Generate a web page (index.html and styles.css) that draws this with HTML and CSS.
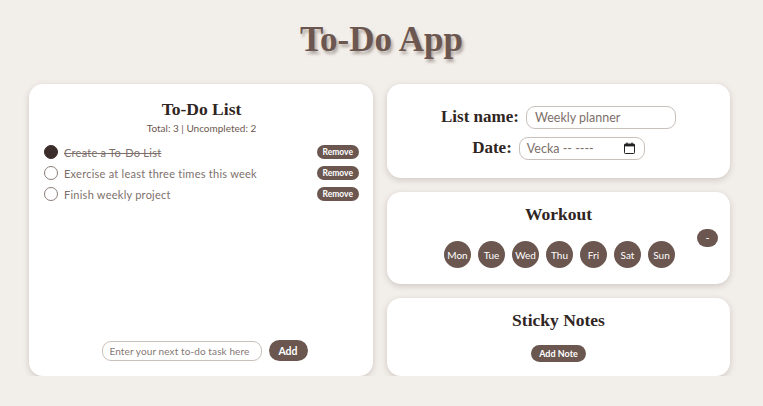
FILE: index.html
```html
<!DOCTYPE html>
<html lang="sv">
<head>
<meta charset="utf-8">
<title>To-Do App</title>
<link rel="stylesheet" href="styles.css">
</head>
<body>
<h1 class="app-title">To-Do App</h1>
<main class="layout">
  <section class="card todo-card">
    <h2 class="card-title">To-Do List</h2>
    <p class="stats">Total: 3 | Uncompleted: 2</p>
    <ul class="todo-list">
      <li class="todo-item done">
        <span class="check checked"></span>
        <span class="todo-text">Create a To-Do List</span>
        <button class="pill small">Remove</button>
      </li>
      <li class="todo-item">
        <span class="check"></span>
        <span class="todo-text">Exercise at least three times this week</span>
        <button class="pill small">Remove</button>
      </li>
      <li class="todo-item">
        <span class="check"></span>
        <span class="todo-text">Finish weekly project</span>
        <button class="pill small">Remove</button>
      </li>
    </ul>
    <form class="add-form">
      <input class="text-input task-input" type="text" placeholder="Enter your next to-do task here">
      <button type="button" class="pill add-btn">Add</button>
    </form>
  </section>

  <div class="side">
    <section class="card meta-card">
      <div class="field-row">
        <label class="field-label">List name:</label>
        <div class="text-input name-input">Weekly planner</div>
      </div>
      <div class="field-row">
        <label class="field-label">Date:</label>
        <div class="text-input date-input">
          <span>Vecka -- ----</span>
          <svg class="cal" width="11" height="12" viewBox="0 0 11 12" aria-hidden="true">
            <rect x="0.5" y="2" width="10" height="9.5" rx="0.8" fill="none" stroke="#222" stroke-width="1"/>
            <rect x="0.5" y="2" width="10" height="2.4" fill="#222"/>
            <rect x="2.4" y="0.5" width="1.2" height="2" fill="#222"/>
            <rect x="7.4" y="0.5" width="1.2" height="2" fill="#222"/>
          </svg>
        </div>
      </div>
    </section>

    <section class="card workout-card">
      <h2 class="card-title">Workout</h2>
      <div class="days">
        <span class="day">Mon</span>
        <span class="day">Tue</span>
        <span class="day">Wed</span>
        <span class="day">Thu</span>
        <span class="day">Fri</span>
        <span class="day">Sat</span>
        <span class="day">Sun</span>
      </div>
      <button class="pill minus-btn">-</button>
    </section>

    <section class="card notes-card">
      <h2 class="card-title">Sticky Notes</h2>
      <button class="pill small note-btn">Add Note</button>
    </section>
  </div>
</main>
</body>
</html>
```
FILE: styles.css
```css
* { box-sizing: border-box; }

body {
  margin: 0;
  background: #f2eeea;
  font-family: "Lato", "Open Sans", sans-serif;
  color: #3b302d;
}

.app-title {
  margin: 0;
  padding-top: 18px;
  height: 84px;
  text-align: center;
  font-family: "Liberation Serif", serif;
  font-weight: bold;
  font-size: 35px;
  line-height: 44px;
  color: #6b5750;
  text-shadow: 2px 3px 3px rgba(60, 40, 30, 0.35);
}

.layout {
  display: grid;
  grid-template-columns: 344px 343px;
  gap: 14px;
  padding-left: 29px;
  height: 292px;
}

.card {
  background: #fff;
  border-radius: 14px;
  box-shadow: 0 2px 6px rgba(90, 70, 60, 0.22);
}

.card-title {
  margin: 0;
  text-align: center;
  font-family: "Liberation Serif", serif;
  font-weight: bold;
  font-size: 17.5px;
  line-height: 22px;
  color: #2f2522;
}

.todo-card {
  display: flex;
  flex-direction: column;
  padding: 14px 14px 15px 15px;
}

.stats {
  margin: 2px 0 0;
  text-align: center;
  font-size: 10px;
  line-height: 12px;
  color: #6b5750;
}

.todo-list {
  list-style: none;
  margin: 11px 0 0;
  padding: 0;
  display: flex;
  flex-direction: column;
  gap: 7px;
}

.todo-item {
  display: flex;
  align-items: center;
  height: 14px;
}

.check {
  width: 14px;
  height: 14px;
  border-radius: 50%;
  border: 1px solid #8a7d79;
  flex: none;
  margin-right: 6px;
}

.check.checked {
  background: #3b2d2a;
  border-color: #3b2d2a;
}

.todo-text {
  flex: 1;
  font-size: 11px;
  letter-spacing: 0.25px;
  color: #7d706b;
}

.done .todo-text {
  text-decoration: line-through;
  color: #7d706b;
}

.pill {
  border: none;
  background: #6b5750;
  color: #fff;
  border-radius: 999px;
  font-family: "Lato", "Open Sans", sans-serif;
  cursor: pointer;
}

.pill.small {
  font-size: 8.5px;
  padding: 0 6px;
  height: 14px;
  line-height: 14px;
  font-weight: bold;
}

.add-form {
  margin-top: auto;
  display: flex;
  justify-content: center;
  align-items: center;
  gap: 7px;
  padding-left: 6px;
}

.text-input {
  border: 1px solid #c9c0bb;
  border-radius: 9px;
  background: #fff;
  font-family: "Lato", "Open Sans", sans-serif;
  color: #7d706b;
}

.task-input {
  width: 160px;
  height: 20px;
  padding: 0 7px;
  font-size: 10px;
  letter-spacing: 0.1px;
}

.task-input::placeholder { color: #857873; }

.add-btn {
  width: 39px;
  height: 21px;
  font-size: 10.5px;
  font-weight: bold;
}

.side {
  display: grid;
  grid-template-rows: 94px 92px 78px;
  gap: 14px;
}

.meta-card {
  display: flex;
  flex-direction: column;
  align-items: center;
  justify-content: center;
  gap: 8px;
  padding-top: 3px;
}

.field-row {
  display: flex;
  align-items: center;
  gap: 7px;
}

.field-label {
  font-family: "Liberation Serif", serif;
  font-weight: bold;
  font-size: 17px;
  color: #2f2522;
}

.name-input {
  width: 150px;
  height: 23px;
  line-height: 21px;
  padding-left: 8px;
  font-size: 12.5px;
}

.date-input {
  width: 126px;
  height: 23px;
  display: flex;
  align-items: center;
  justify-content: space-between;
  padding: 0 9px 0 7px;
  font-size: 12.5px;
}

.cal { display: block; }

.workout-card {
  position: relative;
  padding-top: 11px;
}

.days {
  margin-top: 16px;
  display: flex;
  justify-content: center;
  gap: 7px;
  padding-left: 2px;
}

.day {
  width: 27px;
  height: 27px;
  border-radius: 50%;
  background: #6b5750;
  color: #fff;
  font-size: 10px;
  display: flex;
  align-items: center;
  justify-content: center;
}

.minus-btn {
  position: absolute;
  top: 37px;
  right: 12px;
  width: 21px;
  height: 18px;
  font-size: 11px;
  line-height: 18px;
  padding: 0;
}

.notes-card {
  display: flex;
  flex-direction: column;
  align-items: center;
  padding-top: 11px;
}

.pill.note-btn {
  margin-top: 14px;
  height: 17px;
  line-height: 17px;
  padding: 0 8px;
  font-size: 9px;
}
```
